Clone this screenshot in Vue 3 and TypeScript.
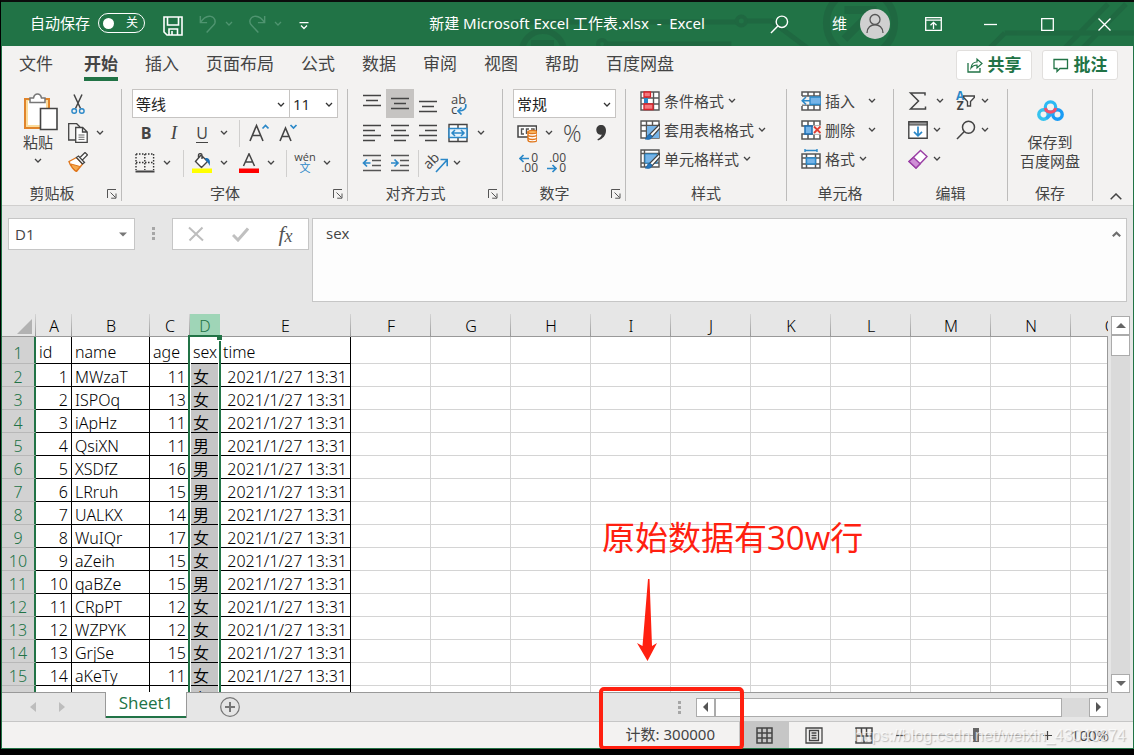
<script setup lang="ts">
import { ref } from 'vue'

interface Row {
  id: number
  name: string
  age: number
  sex: string
}

const title = '新建 Microsoft Excel 工作表.xlsx  -  Excel'
const tabs = ['文件', '开始', '插入', '页面布局', '公式', '数据', '审阅', '视图', '帮助', '百度网盘']
const activeTab = ref('开始')

const columns = ['A', 'B', 'C', 'D', 'E', 'F', 'G', 'H', 'I', 'J', 'K', 'L', 'M', 'N', 'O']
const blanks = columns.slice(5)

const source: [string, number, string][] = [
  ['MWzaT', 11, '女'],
  ['ISPOq', 13, '女'],
  ['iApHz', 11, '女'],
  ['QsiXN', 11, '男'],
  ['XSDfZ', 16, '男'],
  ['LRruh', 15, '男'],
  ['UALKX', 14, '男'],
  ['WuIQr', 17, '女'],
  ['aZeih', 15, '女'],
  ['qaBZe', 15, '男'],
  ['CRpPT', 12, '女'],
  ['WZPYK', 12, '女'],
  ['GrjSe', 15, '女'],
  ['aKeTy', 11, '女'],
  ['bTqLm', 13, '女'],
]
const rows: Row[] = source.map(([name, age, sex], i) => ({ id: i + 1, name, age, sex }))
const stamp = '2021/1/27 13:31'

const styleTools = [
  { icon: 'cond', text: '条件格式' },
  { icon: 'tablestyle', text: '套用表格格式' },
  { icon: 'cellstyle', text: '单元格样式' },
]
const cellTools = [
  { icon: 'insert', text: '插入', wide: true },
  { icon: 'delete', text: '删除', wide: true },
  { icon: 'format', text: '格式', wide: false },
]

const autosave = ref(false)
const zoom = ref(100)
const nameBox = ref('D1')
const formula = ref('sex')
</script>

<template>
  <div class="app">
    <svg class="defs" aria-hidden="true">
      <symbol id="chev" viewBox="0 0 8 6"><path d="M1 1l3 3 3-3" fill="none" stroke="currentColor" stroke-width="1.3" /></symbol>
      <symbol id="launch" viewBox="0 0 10 10"><path d="M.5 9V.5H9M3.500 3.500l5 5M9 4.500V9.200H4.200" fill="none" stroke="#555" /></symbol>
      <symbol id="save" viewBox="0 0 20 20"><path d="M1 1h18v18H4l-3-3zM4.500 1v8h11V1M6 19v-6h8.500v6M9 15v4" fill="none" stroke="#fff" stroke-width="1.600" /></symbol>
      <symbol id="undo" viewBox="0 0 20 20"><path d="M1.500 1v7.500H9M1.500 8.500C5 3 9 .8 13 1.500c5 1 6.500 6.500 3 10L8.500 19.500" fill="none" stroke="#4f9470" stroke-width="1.600" /></symbol>
      <symbol id="cut" viewBox="0 0 20 20">
        <path d="M6 .5l6.500 14M14 .5l-6.500 14" fill="none" stroke="#444" stroke-width="1.500" />
        <circle cx="6.200" cy="17" r="2.300" fill="none" stroke="#2b88c8" stroke-width="1.400" /><circle cx="13.800" cy="17" r="2.300" fill="none" stroke="#2b88c8" stroke-width="1.400" />
      </symbol>
      <symbol id="copy" viewBox="0 0 20 20">
        <path d="M7 17H.7V.7h8L12 4" fill="none" stroke="#444" stroke-width="1.300" />
        <path d="M7.700 4.500h7l4.500 4.500v10.300H7.700zM14.500 4.500V9h4.700" fill="#fff" stroke="#444" stroke-width="1.300" />
        <path d="M10.500 12h6M10.500 14.200h6M10.500 16.400h6" stroke="#666" />
      </symbol>
      <symbol id="brush" viewBox="0 0 20 20">
        <path d="M1 9.500l7.500-4 6 6.500-6 7.500c-2-1-6-5-7.500-10z" fill="#fff" stroke="#e0761b" stroke-width="1.400" />
        <path d="M3 12l9 2.500-4 4.500-4-4z" fill="#f5a94f" stroke="#e0761b" />
        <path d="M8.500 5.500l2-1.500 6 6.500-2 1.500zM12 5.500l5-5 2.400 2.400-4.900 5" fill="#fff" stroke="#444" stroke-width="1.300" />
      </symbol>
      <symbol id="paste" viewBox="0 0 36 38">
        <path d="M2 6h24v29H2z" fill="#fbdc9c" stroke="#e0842a" stroke-width="2" /><path d="M5 8h18v24H5z" fill="#fff" />
        <path d="M7 9.500V5h3.500C11 2.500 12.500 1 14.500 1S18 2.500 18.500 5H22v4.500z" fill="#fff" stroke="#777" stroke-width="1.500" />
        <path d="M17.500 15.500h16.500v21H17.500z" fill="#fff" stroke="#444" stroke-width="1.600" />
      </symbol>
      <symbol id="border" viewBox="0 0 20 20">
        <path d="M1 1h18M1 9.500h18" stroke="#333" stroke-width="1.400" stroke-dasharray="1.500 1.500" />
        <path d="M1 1v16M9.800 1v16M18.600 1v16" stroke="#333" stroke-width="1.400" stroke-dasharray="1.500 1.500" />
        <path d="M.5 18.500h19" stroke="#444" stroke-width="2" />
      </symbol>
      <symbol id="fill" viewBox="0 0 20 20">
        <path d="M9 2L3.500 8.500l6 6 6-6L9.500 2.500M6.500 5V2.500C6.500 0 10 0 10 2.500V6" fill="#fff" stroke="#444" stroke-width="1.400" />
        <path d="M13 5c4-.5 6 2 4.500 8-1-3-2-4-3.500-5z" fill="#1c6fb5" /><path d="M0 15.500h20v4.500H0z" fill="#ff0" />
      </symbol>
      <symbol id="color" viewBox="0 0 20 20"><path d="M4.500 13L10 .8 15.500 13M6.300 9h7.400" fill="none" stroke="#444" stroke-width="1.500" /><path d="M0 15.500h20v4.500H0z" fill="red" /></symbol>
      <symbol id="grow" viewBox="0 0 20 20"><path d="M1 18L7.500 2.500 14 18M3.300 12.500h8.400" fill="none" stroke="#444" stroke-width="1.600" /><path d="M13.500 5.500l3-3 3 3" fill="none" stroke="#2b88c8" stroke-width="1.700" /></symbol>
      <symbol id="shrink" viewBox="0 0 20 20"><path d="M2 18L7.500 5 13 18M4 13.500h7" fill="none" stroke="#444" stroke-width="1.600" /><path d="M12.500 2l3 3 3-3" fill="none" stroke="#2b88c8" stroke-width="1.700" /></symbol>
      <symbol id="atop" viewBox="0 0 20 20"><path d="M1 4.500h18M4 9.500h12M1 14.500h18" stroke="#444" stroke-width="1.500" /></symbol>
      <symbol id="aleft" viewBox="0 0 20 20"><path d="M1 2.500h18M1 7.500h12M1 12.500h18M1 17.500h12" stroke="#444" stroke-width="1.500" /></symbol>
      <symbol id="acenter" viewBox="0 0 20 20"><path d="M1 2.500h18M4 7.500h12M1 12.500h18M4 17.500h12" stroke="#444" stroke-width="1.500" /></symbol>
      <symbol id="aright" viewBox="0 0 20 20"><path d="M1 2.500h18M7 7.500h12M1 12.500h18M7 17.500h12" stroke="#444" stroke-width="1.500" /></symbol>
      <symbol id="outdent" viewBox="0 0 20 20"><path d="M1 2.500h18M10 7.500h9M10 12.500h9M1 17.500h18" stroke="#555" stroke-width="1.500" /><path d="M8.500 10H1.500M5 6.500L1.500 10 5 13.500" fill="none" stroke="#2b88c8" stroke-width="1.700" /></symbol>
      <symbol id="indent" viewBox="0 0 20 20"><path d="M1 2.500h18M10 7.500h9M10 12.500h9M1 17.500h18" stroke="#555" stroke-width="1.500" /><path d="M1 10h7M4.500 6.500L8 10l-3.500 3.500" fill="none" stroke="#2b88c8" stroke-width="1.700" /></symbol>
      <symbol id="merge" viewBox="0 0 20 20">
        <path d="M1 1.500h18v17H1zM10 1.500v17" fill="#fff" stroke="#444" stroke-width="1.400" /><path d="M1 5.500h18v9H1z" fill="#e8f3fb" stroke="#2b88c8" stroke-width="1.500" />
        <path d="M4 10h12M7 7l-3 3 3 3M13 7l3 3-3 3" fill="none" stroke="#2b88c8" stroke-width="1.500" />
      </symbol>
      <symbol id="sigma" viewBox="0 0 20 20"><path d="M17 4.500V2H2.500l8 8-8 8H17.500v-2.500" fill="none" stroke="#444" stroke-width="1.500" /></symbol>
      <symbol id="funnel" viewBox="0 0 12 12"><path d="M.7 1h10.600v1.500L7.500 6.500V11h-3V6.500L.7 2.500z" fill="#fff" stroke="#444" stroke-width="1.400" /></symbol>
      <symbol id="filldown" viewBox="0 0 20 20"><path d="M.8 1.800h18.400v16.400H.8z" fill="#fff" stroke="#444" stroke-width="1.400" /><path d="M1 2h18v3H1z" fill="#999" stroke="#444" /><path d="M10 6.500v9M6 11.800l4 4 4-4" fill="none" stroke="#2b88c8" stroke-width="1.700" /></symbol>
      <symbol id="find" viewBox="0 0 20 20"><circle cx="12.500" cy="7.200" r="6" fill="none" stroke="currentColor" stroke-width="1.500" /><path d="M8.300 11.500L1 19" stroke="currentColor" stroke-width="1.500" /></symbol>
      <symbol id="eraser" viewBox="0 0 20 20"><path d="M1 12.500L12.500 1.500l6.500 6-11 11.500z" fill="#fff" stroke="#9a3fa5" stroke-width="1.500" /><path d="M1 12.500l4.500-4 6.700 6.200L8 19z" fill="#cf8fd6" stroke="#9a3fa5" stroke-width="1.400" /></symbol>
      <symbol id="cond" viewBox="0 0 20 20">
        <path d="M1 1h18v18H1zM1 7h18M1 13h18M6.500 1v18M13.500 1v18" fill="#fff" stroke="#555" stroke-width="1.400" />
        <path d="M4 1h6.500v5H4zM4 13h9v5.500H4z" fill="#f2797e" stroke="#d8232a" stroke-width="1.300" /><path d="M4 7h4v5H4z" fill="#2b88c8" />
      </symbol>
      <symbol id="tablestyle" viewBox="0 0 20 20">
        <path d="M1 1h18v17H1zM1 5.500h18M1 11h18M6.500 1v17M12.500 1v17" fill="#fff" stroke="#555" stroke-width="1.400" />
        <path d="M7 6h12v12H7z" fill="#76b4e8" /><use href="#paintbrush" />
      </symbol>
      <symbol id="cellstyle" viewBox="0 0 20 20">
        <path d="M1 1h18v17H1zM1 4.500h18M1 14h18M4.500 1v17" fill="#fff" stroke="#555" stroke-width="1.400" />
        <path d="M5 5h12v9H5z" fill="#76b4e8" stroke="#2b88c8" /><use href="#paintbrush" />
      </symbol>
      <symbol id="paintbrush" viewBox="0 0 20 20"><path d="M19.500 4.500L9.500 14.500l2.500 2.500 8-9z" fill="#fff" stroke="#444" stroke-width="1.200" /><path d="M5 19c2.500-.5 1.500-4.500 4.500-4.500 2.500 0 3 2.500 1.500 4-1.500 1.300-4 1.200-6 .5z" fill="#2476bd" stroke="#1c5f9c" stroke-width=".6" /></symbol>
      <symbol id="insert" viewBox="0 0 20 20">
        <path d="M1 5V1h18v18H1v-4M1 14h18M1 5h18M7 1v4M13 1v4M7 14v5M13 14v5" fill="#fff" stroke="#555" stroke-width="1.500" />
        <path d="M0 6h9v7.500H0z" fill="#f3f2f1" />
        <path d="M9 6h11v7.500H9z" fill="#76b4e8" stroke="#2b88c8" stroke-width="1.300" /><path d="M9 9.700H1M5 6L1.200 9.700 5 13.400" fill="none" stroke="#2b88c8" stroke-width="1.500" />
      </symbol>
      <symbol id="delete" viewBox="0 0 20 20">
        <path d="M1 1h18v5H1zM1 14h18v5H1zM7 1v5M13 1v5M7 14v5M13 14v5" fill="#fff" stroke="#555" stroke-width="1.500" />
        <path d="M4 6h7v8H4z" fill="#76b4e8" stroke="#1c6fb5" stroke-width="1.500" /><path d="M12 5.500h8v9h-8z" fill="#f3f2f1" /><path d="M13 6.500l6.500 6.500M19.500 6.500L13 13" stroke="#e03c31" stroke-width="1.800" />
      </symbol>
      <symbol id="format" viewBox="0 0 20 20">
        <path d="M1 5h18v14H1zM1 9h18M1 15h18M5.500 5v14M14.500 5v14" fill="#fff" stroke="#555" stroke-width="1.500" />
        <path d="M5.500 9h9v6h-9z" fill="#76b4e8" stroke="#2b88c8" stroke-width="1.400" /><path d="M4 1.500h12M4 0v3M16 0v3" stroke="#2b88c8" stroke-width="1.400" />
      </symbol>
      <symbol id="cash" viewBox="0 0 20 20">
        <path d="M1 3h18.500v11H1z" fill="#fff" stroke="#444" stroke-width="1.500" /><path d="M7 6H4.500v5H7M12 6H9.500v5M14 6h3v4" fill="none" stroke="#555" stroke-width="1.400" />
        <path d="M11 9v8c0 2.500 9 2.500 9 0V9z" fill="#fff" stroke="#e0761b" stroke-width="1.400" /><ellipse cx="15.500" cy="9" rx="4.500" ry="1.700" fill="#f8b45f" stroke="#e0761b" stroke-width="1.300" /><path d="M11 12c1 2 8 2 9 0M11 15c1 2 8 2 9 0" fill="none" stroke="#e0761b" stroke-width="1.300" />
      </symbol>
      <symbol id="cloud" viewBox="0 0 27 21">
        <circle cx="6.500" cy="14.500" r="4.700" fill="none" stroke="#35c3ee" stroke-width="3.400" />
        <circle cx="20.500" cy="14.500" r="4.700" fill="none" stroke="#1a9cf5" stroke-width="3.400" />
        <path d="M9.500 18.500l8-8" stroke="#2aa9f3" stroke-width="3.400" />
        <circle cx="13.500" cy="7" r="5.200" fill="none" stroke="#2cb9f3" stroke-width="3.200" /><path d="M8.400 8c1.200 5.600 9 5.600 10.200 0" fill="none" stroke="#f4506c" stroke-width="3.200" />
      </symbol>
      <symbol id="share" viewBox="0 0 16 16"><path d="M1 6v9h12v-4" fill="none" stroke="#217346" stroke-width="1.300" /><path d="M4 11c.5-4 3-6 6-6V2l5 4.500-5 4.500V8c-3 0-4.500 1-6 3z" fill="none" stroke="#217346" stroke-width="1.200" /></symbol>
      <symbol id="comment" viewBox="0 0 16 16"><path d="M1 2.500h13.500v9H7l-3 3v-3H1z" fill="none" stroke="#217346" stroke-width="1.300" /></symbol>
    </svg>

    <header class="titlebar">
      <svg class="circuit" viewBox="0 0 1131 44" preserveAspectRatio="xMidYMid slice" aria-hidden="true">
        <g fill="none" stroke="#1f6540" stroke-width="5" opacity=".75">
          <circle cx="541" cy="50" r="21" stroke-width="6" /><path d="M529 41h23" stroke-width="6" />
          <circle cx="600" cy="42" r="4" stroke-width="4" /><path d="M605 42h124" />
          <path d="M512 20h223M744 19h25l36 27M1002 31h129M1002 31l-16 16M1062 46l43-44M1080 46l43-44" /><circle cx="739" cy="19" r="4.500" stroke-width="4" />
          <circle cx="858" cy="21" r="34" stroke-width="7" /><path d="M842 37l28-28M842 8h28v26" stroke-width="8" />
        </g>
      </svg>
      <div class="tb-left">
        <label class="auto">自动保存<span class="toggle"><input v-model="autosave" type="checkbox" aria-label="自动保存"><span>关</span></span></label>
        <button class="qa qa-save" aria-label="保存"><svg width="20" height="20"><use href="#save" /></svg></button>
        <button class="qa qa-do" aria-label="撤消"><svg width="18" height="20"><use href="#undo" /></svg><svg class="chev"><use href="#chev" /></svg></button>
        <button class="qa qa-do" aria-label="恢复"><svg class="flip" width="18" height="20"><use href="#undo" /></svg><svg class="chev"><use href="#chev" /></svg></button>
        <button class="qa qa-more" aria-label="自定义快速访问工具栏"><svg width="10" height="8" viewBox="0 0 10 8"><path d="M.5.7h9M2 3.500l3 3 3-3" fill="none" stroke="#fff" stroke-width="1.300" /></svg></button>
      </div>
      <h1 class="title">{{ title }}</h1>
      <div class="tb-right">
        <button class="qa search" aria-label="搜索"><svg width="19" height="19"><use href="#find" /></svg></button>
        <span class="user">维</span>
        <button class="qa avatar" aria-label="账户"><svg width="30" height="30" viewBox="0 0 30 30"><circle cx="15" cy="15" r="15" fill="#d0d0d0" /><circle cx="15" cy="10.500" r="5" fill="none" stroke="#555" stroke-width="1.300" /><path d="M7 24c0-11 16-11 16 0" fill="none" stroke="#555" stroke-width="1.300" /></svg></button>
        <button class="win" aria-label="功能区显示选项"><svg width="17" height="14" viewBox="0 0 17 14"><path d="M.7.7h15.600v12.600H.7zM.7 3.200h15.600M8.500 12V5.500M5.500 8.300l3-3 3 3" fill="none" stroke="#fff" stroke-width="1.300" /></svg></button>
        <button class="win" aria-label="最小化"><svg width="13" height="13" viewBox="0 0 13 13"><path d="M0 6.500h13" stroke="#fff" stroke-width="1.300" /></svg></button>
        <button class="win" aria-label="最大化"><svg width="13" height="13" viewBox="0 0 13 13"><path d="M.7.7h11.600v11.600H.7z" fill="none" stroke="#fff" stroke-width="1.300" /></svg></button>
        <button class="win" aria-label="关闭"><svg width="13" height="13" viewBox="0 0 13 13"><path d="M.5.5l12 12M12.500.5l-12 12" stroke="#fff" stroke-width="1.400" /></svg></button>
      </div>
    </header>

    <nav class="tabs">
      <button v-for="t in tabs" :key="t" class="tab" :class="{ active: t === activeTab }" @click="activeTab = t">{{ t }}</button>
      <span class="grow" />
      <button class="pill"><svg width="16" height="16"><use href="#share" /></svg>共享</button>
      <button class="pill"><svg width="16" height="16"><use href="#comment" /></svg>批注</button>
    </nav>

    <div class="ribbon">
      <section class="group g-clip">
        <div class="body clip">
          <button class="big"><svg class="board" width="36" height="38"><use href="#paste" /></svg><span>粘贴</span><svg class="chev"><use href="#chev" /></svg></button>
          <div class="stack">
            <button class="tool" aria-label="剪切"><svg class="ic"><use href="#cut" /></svg></button>
            <button class="tool" aria-label="复制"><svg class="ic"><use href="#copy" /></svg><svg class="chev"><use href="#chev" /></svg></button>
            <button class="tool" aria-label="格式刷"><svg class="ic"><use href="#brush" /></svg></button>
          </div>
        </div>
        <footer><span>剪贴板</span><button aria-label="剪贴板选项"><svg width="10" height="10"><use href="#launch" /></svg></button></footer>
      </section>

      <section class="group g-font">
        <div class="body">
          <div class="line">
            <span class="pick pick-font"><select aria-label="字体"><option>等线</option></select><svg class="chev"><use href="#chev" /></svg></span>
            <span class="pick pick-size"><select aria-label="字号"><option>11</option></select><svg class="chev"><use href="#chev" /></svg></span>
          </div>
          <div class="line">
            <button class="tool sq b">B</button><button class="tool sq i">I</button><button class="tool sq u"><span>U</span></button>
            <button class="tool drop" aria-label="下划线选项"><svg class="chev"><use href="#chev" /></svg></button>
            <i class="sep" />
            <button class="tool grow-a" aria-label="增大字号"><svg class="ic"><use href="#grow" /></svg></button>
            <button class="tool" aria-label="减小字号"><svg class="ic"><use href="#shrink" /></svg></button>
          </div>
          <div class="line">
            <button class="tool split first-split" aria-label="边框"><svg class="ic"><use href="#border" /></svg><svg class="chev"><use href="#chev" /></svg></button>
            <i class="sep" />
            <button class="tool split" aria-label="填充颜色"><svg class="ic"><use href="#fill" /></svg><svg class="chev"><use href="#chev" /></svg></button>
            <button class="tool split font-split" aria-label="字体颜色"><svg class="ic"><use href="#color" /></svg><svg class="chev"><use href="#chev" /></svg></button>
            <i class="sep" />
            <button class="tool split"><span class="wen">wén<b>文</b></span><svg class="chev"><use href="#chev" /></svg></button>
          </div>
        </div>
        <footer><span>字体</span><button aria-label="字体设置"><svg width="10" height="10"><use href="#launch" /></svg></button></footer>
      </section>

      <section class="group g-align">
        <div class="body">
          <div class="line">
            <button class="tool sq rise" aria-label="顶端对齐"><svg class="ic"><use href="#atop" /></svg></button>
            <button class="tool sq on" aria-label="垂直居中"><svg class="ic"><use href="#atop" /></svg></button>
            <button class="tool sq sink" aria-label="底端对齐"><svg class="ic"><use href="#atop" /></svg></button>
            <button class="tool wrap" aria-label="自动换行"><span>ab</span><span>c<svg width="10" height="11" viewBox="0 0 10 11"><path d="M8.500 0c1.300 4-1 7-7.500 7M4.500 3.500L1 7l3.500 3.500" fill="none" stroke="#2b88c8" stroke-width="1.700" /></svg></span></button>
          </div>
          <div class="line">
            <button class="tool sq" aria-label="左对齐"><svg class="ic"><use href="#aleft" /></svg></button>
            <button class="tool sq" aria-label="居中"><svg class="ic"><use href="#acenter" /></svg></button>
            <button class="tool sq" aria-label="右对齐"><svg class="ic"><use href="#aright" /></svg></button>
            <button class="tool split merge" aria-label="合并后居中"><svg class="ic"><use href="#merge" /></svg><svg class="chev"><use href="#chev" /></svg></button>
          </div>
          <div class="line">
            <button class="tool sq" aria-label="减少缩进量"><svg class="ic"><use href="#outdent" /></svg></button>
            <button class="tool sq" aria-label="增加缩进量"><svg class="ic"><use href="#indent" /></svg></button>
            <i class="sep orient-sep" />
            <button class="tool orient" aria-label="方向"><svg class="slant" width="20" height="20" viewBox="0 0 20 20"><text x="-3" y="12" font-size="14" fill="#444" transform="rotate(-45 5 10)">ab</text><path d="M8 19L19 7M12.500 6.500h6.700v6.700" fill="none" stroke="#2b88c8" stroke-width="1.600" /></svg><svg class="chev"><use href="#chev" /></svg></button>
          </div>
        </div>
        <footer><span>对齐方式</span><button aria-label="对齐设置"><svg width="10" height="10"><use href="#launch" /></svg></button></footer>
      </section>

      <section class="group g-num">
        <div class="body">
          <div class="line"><span class="pick pick-num"><select aria-label="数字格式"><option>常规</option></select><svg class="chev"><use href="#chev" /></svg></span></div>
          <div class="line nums">
            <button class="tool split" aria-label="会计数字格式"><svg class="ic"><use href="#cash" /></svg><svg class="chev"><use href="#chev" /></svg></button>
            <button class="tool pct">%</button>
            <button class="tool comma" aria-label="千位分隔"><svg width="12" height="18" viewBox="0 0 12 18"><path d="M6 1c3 0 5 2 5 5.500C11 11 8 15 3 16.500l-.6-1.300C5 14 6.500 12 6.700 10.500 3.500 11.500 1.300 9 1.300 6 1.300 3 3.300 1 6 1z" fill="#3b3b3b" /></svg></button>
          </div>
          <div class="line nums decs">
            <button class="tool dec" aria-label="增加小数位数"><span><svg width="10" height="9" viewBox="0 0 10 9"><path d="M10 4.500H1M4.500 1L1 4.500 4.500 8" fill="none" stroke="#2b88c8" stroke-width="1.700" /></svg>0</span><span>.00</span></button>
            <button class="tool dec" aria-label="减少小数位数"><span>.00</span><span><svg width="10" height="9" viewBox="0 0 10 9"><path d="M0 4.500h9M5.500 1L9 4.500 5.500 8" fill="none" stroke="#2b88c8" stroke-width="1.700" /></svg>0</span></button>
          </div>
        </div>
        <footer><span>数字</span><button aria-label="数字设置"><svg width="10" height="10"><use href="#launch" /></svg></button></footer>
      </section>

      <section class="group g-style">
        <div class="body list">
          <button v-for="s in styleTools" :key="s.icon" class="tool item"><svg class="ic"><use :href="'#' + s.icon" /></svg><span>{{ s.text }}</span><svg class="chev"><use href="#chev" /></svg></button>
        </div>
        <footer class="plain"><span>样式</span></footer>
      </section>

      <section class="group g-cells">
        <div class="body list">
          <button v-for="s in cellTools" :key="s.icon" class="tool item" :class="{ wide: s.wide }"><svg class="ic"><use :href="'#' + s.icon" /></svg><span>{{ s.text }}</span><svg class="chev"><use href="#chev" /></svg></button>
        </div>
        <footer class="plain"><span>单元格</span></footer>
      </section>

      <section class="group g-edit">
        <div class="body list edit">
          <button class="tool item sum" aria-label="自动求和"><svg class="ic"><use href="#sigma" /></svg><svg class="chev"><use href="#chev" /></svg></button>
          <button class="tool item" aria-label="排序和筛选"><span class="az"><span class="az-l"><b>A</b><b>Z</b></span><svg width="12" height="12"><use href="#funnel" /></svg></span><svg class="chev"><use href="#chev" /></svg></button>
          <button class="tool item" aria-label="填充"><svg class="ic"><use href="#filldown" /></svg><svg class="chev"><use href="#chev" /></svg></button>
          <button class="tool item" aria-label="查找和选择"><svg class="ic"><use href="#find" /></svg><svg class="chev"><use href="#chev" /></svg></button>
          <button class="tool item" aria-label="清除"><svg class="ic"><use href="#eraser" /></svg><svg class="chev"><use href="#chev" /></svg></button>
        </div>
        <footer class="plain"><span>编辑</span></footer>
      </section>

      <section class="group g-save">
        <div class="body">
          <button class="baidu"><svg width="27" height="21"><use href="#cloud" /></svg><span>保存到<br>百度网盘</span></button>
        </div>
        <footer class="plain"><span>保存</span></footer>
      </section>
      <span class="grow" />
      <button class="collapse" aria-label="折叠功能区"><svg width="12" height="7" viewBox="0 0 12 7"><path d="M.7 6.300L6 1l5.300 5.300" fill="none" stroke="#444" stroke-width="1.500" /></svg></button>
    </div>

    <div class="formula-bar">
      <div class="namebox"><input v-model="nameBox" aria-label="名称框"><button aria-label="名称列表"><svg width="8" height="5" viewBox="0 0 8 5"><path d="M0 .5h8L4 4.500z" fill="#777" /></svg></button></div>
      <svg class="dots" width="3" height="13" viewBox="0 0 3 13"><path d="M0 0h3v3H0zM0 5h3v3H0zM0 10h3v3H0z" fill="#a6a6a6" /></svg>
      <div class="fx">
        <button aria-label="取消"><svg width="16" height="16" viewBox="0 0 16 16"><path d="M1 1.500l14 13M14.500 1.500l-13 13" stroke="#bdbdbd" stroke-width="2" /></svg></button>
        <button aria-label="输入"><svg width="17" height="15" viewBox="0 0 17 15"><path d="M1 8l5 5L16 1.500" fill="none" stroke="#c0c0c0" stroke-width="3" /></svg></button>
        <button class="fn"><i>f</i><i>x</i></button>
      </div>
      <div class="formula"><textarea v-model="formula" aria-label="编辑栏" rows="1" /><button aria-label="折叠编辑栏"><svg width="9" height="6" viewBox="0 0 9 6"><path d="M.8 5.200l3.700-3.500 3.700 3.500" fill="none" stroke="#6e6e6e" stroke-width="2.200" /></svg></button></div>
    </div>

    <main class="sheet">
      <div class="grid">
        <table>
          <colgroup>
            <col class="c-head"><col class="c-a"><col class="c-b"><col class="c-c"><col class="c-d"><col class="c-e"><col v-for="c in blanks" :key="c" class="c-x">
          </colgroup>
          <thead>
            <tr>
              <th class="corner"><svg width="15" height="15" viewBox="0 0 15 15"><path d="M15 0v15H0z" fill="#b2b2b2" /></svg></th>
              <th v-for="c in columns" :key="c" :class="{ sel: c === 'D' }">{{ c }}<span v-if="c === 'D'" class="selection" /></th>
            </tr>
          </thead>
          <tbody>
            <tr class="first">
              <th>1</th><td class="k">id</td><td class="k">name</td><td class="k">age</td><td class="k">sex</td><td class="k">time</td><td v-for="c in blanks" :key="c" />
            </tr>
            <tr v-for="r in rows" :key="r.id">
              <th>{{ r.id + 1 }}</th><td class="k r">{{ r.id }}</td><td class="k">{{ r.name }}</td><td class="k r">{{ r.age }}</td><td class="k d">{{ r.sex }}</td><td class="k r">{{ stamp }}</td><td v-for="c in blanks" :key="c" />
            </tr>
          </tbody>
        </table>
      </div>
      <div class="vscroll">
        <button aria-label="向上滚动"><svg width="10" height="5" viewBox="0 0 10 5"><path d="M0 5l5-5 5 5z" fill="#666" /></svg></button>
        <div class="vtrack"><div class="vthumb" /></div>
        <button aria-label="向下滚动"><svg width="10" height="5" viewBox="0 0 10 5"><path d="M0 0l5 5 5-5z" fill="#666" /></svg></button>
      </div>
      <div class="note">
        <p>原始数据有30w行</p>
        <svg width="20" height="82" viewBox="0 0 20 82"><path d="M11 0l1.500 0L15 67l5-3-9.500 18L0 64l5.500 3z" fill="#ff2010" /></svg>
      </div>
    </main>

    <div class="sheetbar">
      <button class="nav" aria-label="上一个工作表"><svg width="6" height="10" viewBox="0 0 6 10"><path d="M6 0v10L0 5z" fill="#bdbdbd" /></svg></button>
      <button class="nav" aria-label="下一个工作表"><svg width="6" height="10" viewBox="0 0 6 10"><path d="M0 0v10l6-5z" fill="#bdbdbd" /></svg></button>
      <button class="sheettab">Sheet1</button>
      <button class="add" aria-label="新工作表"><svg width="20" height="20" viewBox="0 0 20 20"><circle cx="10" cy="10" r="9.300" fill="none" stroke="#777" stroke-width="1.200" /><path d="M10 5v10M5 10h10" stroke="#777" stroke-width="2" /></svg></button>
      <span class="grow" />
      <svg class="dots" width="3" height="13" viewBox="0 0 3 13"><path d="M0 0h3v3H0zM0 5h3v3H0zM0 10h3v3H0z" fill="#a6a6a6" /></svg>
      <div class="hscroll">
        <button aria-label="向左滚动"><svg width="5" height="10" viewBox="0 0 5 10"><path d="M5 0v10L0 5z" fill="#555" /></svg></button>
        <div class="htrack"><div class="hthumb" /></div>
        <button aria-label="向右滚动"><svg width="5" height="10" viewBox="0 0 5 10"><path d="M0 0v10l5-5z" fill="#555" /></svg></button>
      </div>
    </div>

    <div class="status">
      <div class="frame" />
      <span class="count">计数: 300000</span>
      <button class="view on" aria-label="普通"><svg width="17" height="17" viewBox="0 0 17 17"><path d="M1 1h15v15H1zM1 6h15M1 11h15M6 1v15M11 1v15" fill="none" stroke="#444" stroke-width="1.500" /></svg></button>
      <button class="view" aria-label="页面布局"><svg width="18" height="17" viewBox="0 0 18 17"><path d="M1 1h16v15H1zM4.500 3.500h9v10h-9zM6.500 6h5M6.500 8.500h5M6.500 11h5" fill="none" stroke="#444" stroke-width="1.300" /></svg></button>
      <button class="view" aria-label="分页预览"><svg width="18" height="17" viewBox="0 0 18 17"><path d="M1 1h16v15H1zM1 9h16M6.500 1v8M11.500 1v8M9 9v7" fill="none" stroke="#444" stroke-width="1.500" /></svg></button>
      <button class="zoom-btn" aria-label="缩小"><svg width="9" height="9" viewBox="0 0 9 9"><path d="M0 4.500h9" stroke="#444" stroke-width="1.200" /></svg></button>
      <input v-model="zoom" type="range" min="0" max="200" aria-label="缩放">
      <button class="zoom-btn" aria-label="放大"><svg width="9" height="9" viewBox="0 0 9 9"><path d="M0 4.500h9M4.500 0v9" stroke="#444" stroke-width="1.200" /></svg></button>
      <span class="pctlabel">{{ zoom }}%</span>
      <span class="mark">https://blog.csdn.net/weixin_43040874</span>
    </div>
  </div>
</template>

<style>
html, body { margin: 0; background: #000; }
</style>

<style scoped>
.app {
  box-sizing: border-box;
  min-width: 1100px;
  height: 100vh;
  display: flex;
  flex-direction: column;
  border-top: 2px solid #0b0d0c;
  border-left: 1px solid #000;
  border-bottom: 6px solid #000;
  background: #e6e6e6;
  box-shadow: inset 1px 0 #217346, inset -1px 0 #217346, inset 0 -1px #217346;
  padding: 0 1px 1px;
  font: 15px/20px "Open Sans", "Noto Sans CJK SC", sans-serif;
  color: #444;
  overflow: hidden;
}
.app * { box-sizing: border-box; }
.defs { position: absolute; width: 0; height: 0; }
button, input, select, textarea { font: inherit; color: inherit; border: 0; background: none; padding: 0; margin: 0; border-radius: 0; outline: 0; }
button { display: flex; align-items: center; justify-content: center; }
svg { display: block; flex: none; }
.grow { flex: 1; }
.chev { width: 8px; height: 6px; }
.ic { width: 20px; height: 20px; }

.titlebar { position: relative; flex: none; height: 44px; display: flex; align-items: center; background: #217346; color: #fff; margin: 0 -1px; }
.circuit { position: absolute; inset: 0; width: 100%; height: 100%; }
.tb-left, .tb-right { position: relative; flex: 1 1 0; display: flex; align-items: center; }
.tb-left { padding-bottom: 2px; }
.tb-right { justify-content: flex-end; padding-right: 1px; }
.auto { display: flex; align-items: center; gap: 8px; margin-left: 29px; }
.toggle { display: flex; align-items: center; justify-content: space-between; width: 47px; height: 20px; border: 1px solid #fff; border-radius: 10px; padding: 0 6px 0 4px; font-size: 12px; }
.toggle input { appearance: none; width: 11px; height: 11px; border-radius: 50%; background: #fff; }
.qa-save { margin-left: 18px; padding-top: 6px; }
.qa-do { margin-left: 15px; gap: 8px; color: #4f9470; padding-top: 2px; }
.qa-save + .qa-do { margin-left: 16px; }
.flip { transform: scaleX(-1); }
.qa-more { margin-left: 17px; padding-top: 5px; }
.title { position: relative; margin: 0; font-family: "Noto Sans", "Noto Sans CJK SC", sans-serif; font-size: 15px; font-weight: 400; line-height: 20px; white-space: pre; padding-bottom: 2px; }
.search { margin-right: 43px; }
.user { margin-right: 13px; padding-bottom: 2px; }
.avatar { margin-right: 15px; }
.win { width: 57px; height: 44px; }

.tabs { flex: none; height: 43px; display: flex; align-items: flex-start; padding: 3px 15px 0 17px; gap: 27px; background: #f3f2f1; font-size: 17px; line-height: 30px; }
.tab { position: relative; height: 33px; align-items: flex-start; white-space: nowrap; }
.tab:nth-child(1) { margin-right: 4px; }
.tab.active { font-weight: 700; }
.tab.active::after { content: ""; position: absolute; left: 0; right: 0; bottom: 1px; height: 4px; background: #217346; }
.tabs .pill { height: 30px; width: 76px; margin-top: 1px; gap: 5px; background: #fff; border: 1px solid #e1dfdd; border-radius: 3px; color: #217346; font-weight: 700; }
.pill + .pill { margin-left: -17px; }

.ribbon { flex: none; display: flex; height: 117px; padding-bottom: 4px; background: #f3f2f1; border-bottom: 1px solid #d0cfce; }
.group { display: flex; flex-direction: column; border-right: 1px solid #bdbcbb; }
.g-clip { width: 120px; }
.g-font { width: 226px; }
.g-align { width: 155px; }
.g-num { width: 123px; }
.g-style { width: 161px; }
.g-cells { width: 107px; }
.g-edit { width: 114px; }
.g-save { width: 85px; }
.body { height: 97px; padding: 0 9px 0 10px; }
.group footer { display: flex; height: 14px; line-height: 14px; padding-right: 4px; }
.group footer span { flex: 1; text-align: center; white-space: nowrap; }
.group footer button { width: 15px; height: 16px; justify-content: flex-end; }
.group footer.plain { padding: 0; }
.line { height: 30px; display: flex; align-items: center; }
.line:first-child { height: 29px; }
.tool { height: 28px; }
.sq { width: 28px; }
.sep { width: 1px; height: 27px; background: #d0cfce; }

.clip { display: flex; padding: 4px 0 0 17px; }
.big { flex-direction: column; width: 38px; justify-content: flex-start; }
.big .board { margin-left: 5px; }
.big span { margin: 1px 0 5px; line-height: 20px; }
.big .chev { margin-top: 1px; }
.stack { display: flex; flex-direction: column; gap: 1px; padding-left: 11px; margin-top: -3px; }
.stack .tool { justify-content: flex-start; gap: 8px; }

.pick { position: relative; display: flex; align-items: center; height: 29px; border: 1px solid #c6c4c2; background: #fff; color: #222; }
.pick select { appearance: none; width: 100%; height: 27px; padding-left: 3px; }
.pick .chev { position: absolute; right: 4px; top: 12px; pointer-events: none; color: #333; }
.pick-font { width: 158px; }
.pick-size { width: 49px; margin-left: -1px; }
.pick-num { width: 104px; }
.b { font-weight: 700; font-size: 16px; }
.i { font-family: "Liberation Serif", serif; font-style: italic; font-size: 19px; }
.u { font-size: 16px; }
.u span { border-bottom: 1px solid #444; line-height: 18px; }
.drop { width: 16px; margin: 0 7px 0 0; }
.grow-a { margin: 0 9px; }
.split { width: 32px; gap: 8px; justify-content: flex-start; }
.g-font .split { width: 47px; padding-left: 8px; gap: 8px; }
.g-font .first-split { width: 51px; padding-left: 3px; }
.g-font .font-split { width: 55px; }
.wen { width: 20px; display: flex; flex-direction: column; align-items: center; font-size: 11px; line-height: 10px; }
.wen b { font-weight: 400; color: #2b88c8; line-height: 12px; }

.g-align .on { background: #c6c4c2; height: 29px; }
.rise { padding-bottom: 6px; }
.sink { padding-top: 6px; }
.wrap { margin-left: 9px; flex-direction: column; align-items: flex-start; font-size: 13px; line-height: 10px; }
.wrap span { display: flex; height: 10px; }
.merge { width: 42px; margin-left: 6px; gap: 9px; }
.orient-sep { margin: 0 9px 0 4px; }
.orient { gap: 5px; }
.slant { overflow: visible; }
.nums { padding-left: 4px; }
.decs { gap: 7px; }
.dec { width: 21px; flex-direction: column; align-items: flex-end; font-size: 12px; line-height: 10px; }
.dec span { display: flex; align-items: center; gap: 2px; height: 10px; }
.pct { font-size: 23px; font-weight: 350; margin-left: 14px; }
.comma { margin-left: 13px; }

.list { padding: 0 0 8px 14px; display: grid; grid-template-rows: 29px 29px 29px; justify-content: start; align-content: start; margin-top: -2px; margin-bottom: 2px; }
.item { justify-content: flex-start; gap: 4px; }
.item span { white-space: nowrap; }
.item.wide .chev { margin-left: 9px; }
.edit { grid-template-columns: 48px 40px; }
.edit .item { gap: 5px; }
.edit .sum { gap: 8px; }
.az { display: flex; align-items: center; width: 20px; }
.az-l { display: flex; flex-direction: column; font-size: 12px; line-height: 10px; }
.az-l b:first-child { color: #2b88c8; }
.az svg { margin-left: -1px; }
.baidu { flex-direction: column; width: 100%; padding-top: 11px; gap: 12px; line-height: 19px; text-align: center; white-space: nowrap; }
.g-save .body { padding: 0; }
.collapse { align-self: flex-end; margin: 0 11px 1px 0; }

.formula-bar { flex: none; display: flex; align-items: flex-start; height: 108px; padding: 12px 6px 0; }
.namebox { width: 127px; height: 32px; display: flex; background: #fff; border: 1px solid #c6c6c6; padding: 0 7px 0 6px; }
.namebox input { flex: 1; min-width: 0; }
.formula-bar .dots { margin: 9px 17px 0 17px; }
.fx { width: 137px; height: 32px; display: flex; background: #fff; border: 1px solid #c6c6c6; }
.fx button { flex: 1; }
.fn { font-family: "Liberation Serif", serif; color: #555; }
.fn i:first-child { font-size: 22px; }
.fn i:last-child { font-size: 18px; padding-top: 4px; }
.formula { flex: 1; height: 84px; margin-left: 3px; display: flex; align-items: flex-start; background: #fdfdfd; border: 1px solid #c6c6c6; padding: 4px 5px 0 13px; }
.formula textarea { flex: 1; height: 70px; resize: none; }
.formula button { padding-top: 8px; }

.sheet { position: relative; flex: 1; min-height: 0; display: flex; }
.grid { position: relative; flex: 1; min-width: 0; overflow: hidden; border-bottom: 1px solid #999; background: linear-gradient(#e6e6e6 22px, #fff 22px); }
.grid::after { content: ""; position: absolute; right: 0; top: 22px; bottom: 0; width: 1px; background: #999; }
table { table-layout: fixed; width: 1149px; border-collapse: separate; border-spacing: 0; font-family: "Noto Sans", "Noto Sans CJK SC", sans-serif; font-size: 16px; font-weight: 350; line-height: 18px; color: #000; }
.c-head { width: 34px; }
.c-a { width: 36px; }
.c-b { width: 78px; }
.c-c { width: 40px; }
.c-d { width: 30px; }
.c-e { width: 131px; }
.c-x { width: 80px; }
thead th { position: relative; height: 23px; padding: 2px 0 0; font-weight: inherit; border-bottom: 1px solid #999; background: linear-gradient(#d4d4d4, #999) right / 1px 100% no-repeat; }
thead th.sel { background: #9fd5b7; color: #217346; }
.corner svg { margin-left: 15px; }
.selection { position: absolute; z-index: 1; top: 21px; left: -2px; width: 33px; height: 2000px; border: 2px solid #217346; box-shadow: inset 1px 0 #fff, inset -1px 0 #fff; }
.selection::after { content: ""; position: absolute; right: -3px; top: -2px; width: 5px; height: 5px; background: #217346; border-bottom: 1px solid #fff; }
tbody th { height: 23px; padding: 0; font-weight: inherit; vertical-align: bottom; color: #217346; background: #d2d2d2; border-bottom: 1px solid #b8b8b8; border-right: 2px solid #217346; }
td { height: 23px; padding: 0 3px; vertical-align: bottom; border-right: 1px solid #d4d4d4; border-bottom: 1px solid #d4d4d4; white-space: nowrap; }
.first th, .first td { height: 27px; line-height: 20px; }
.first td { line-height: 22px; }
td.k { border-color: #000; }
td.r { text-align: right; }
td.d { background: #c6c6c6; }

.vscroll { width: 25px; padding: 2px 3px 0; display: flex; flex-direction: column; }
.vscroll button, .hscroll button { flex: none; width: 19px; height: 19px; background: #fff; border: 1px solid #ababab; }
.vtrack { flex: 1; background: #dadada; }
.vthumb { height: 21px; background: #fff; border: 1px solid #ababab; }
.note { position: absolute; z-index: 3; left: 600px; top: 202px; color: #ff2010; }
.note p { margin: 0 0 19px; font-size: 33px; line-height: 44px; white-space: nowrap; }
.note svg { margin-left: 35px; }

.sheetbar { flex: none; height: 29px; display: flex; align-items: center; border-bottom: 1px solid #c6c6c6; padding-right: 25px; }
.nav { width: 29px; }
.nav:first-child { margin-left: 16px; }
.sheettab { position: relative; z-index: 1; width: 82px; height: 26px; align-self: flex-start; margin: -1px 0 0 29px; padding-bottom: 4px; background: #fff; border: solid #999; border-width: 0 1px; box-shadow: inset 0 -2px #217346; color: #217346; font-size: 17px; }
.add { margin-left: 33px; }
.sheetbar .dots { margin-right: 15px; }
.hscroll { width: 412px; height: 19px; display: flex; }
.htrack { flex: 1; background: #dadada; }
.hthumb { width: 347px; height: 19px; background: #fff; border: 1px solid #ababab; }

.status { position: relative; flex: none; height: 26px; display: flex; align-items: center; justify-content: flex-end; background: #f3f2f1; }
.count { margin-right: 24px; padding-bottom: 2px; font-family: "Noto Sans", "Noto Sans CJK SC", sans-serif; }
.view { width: 50px; height: 26px; }
.view.on { background: #c6c6c6; }
.frame { position: absolute; z-index: 4; right: 389px; bottom: -2px; width: 145px; height: 63px; border: 4px solid #ff2010; border-radius: 5px; }
.zoom-btn { width: 15px; height: 26px; }
.view + .zoom-btn { margin-left: 4px; }
input[type="range"] { appearance: none; width: 126px; height: 14px; margin: 0 1px 0 5px; background: linear-gradient(#aaa, #aaa) center / 100% 1px no-repeat; }
input[type="range"]::-webkit-slider-thumb { appearance: none; width: 6px; height: 14px; background: #666; }
.pctlabel { width: 42px; margin: 0 24px 0 12px; text-align: right; }
.mark { position: absolute; z-index: 5; right: 7px; top: 4px; font: 16px/20px "Liberation Sans", sans-serif; color: rgba(255, 255, 255, .7); text-shadow: 1px 1px 1px rgba(120, 120, 120, .45); pointer-events: none; }
</style>
